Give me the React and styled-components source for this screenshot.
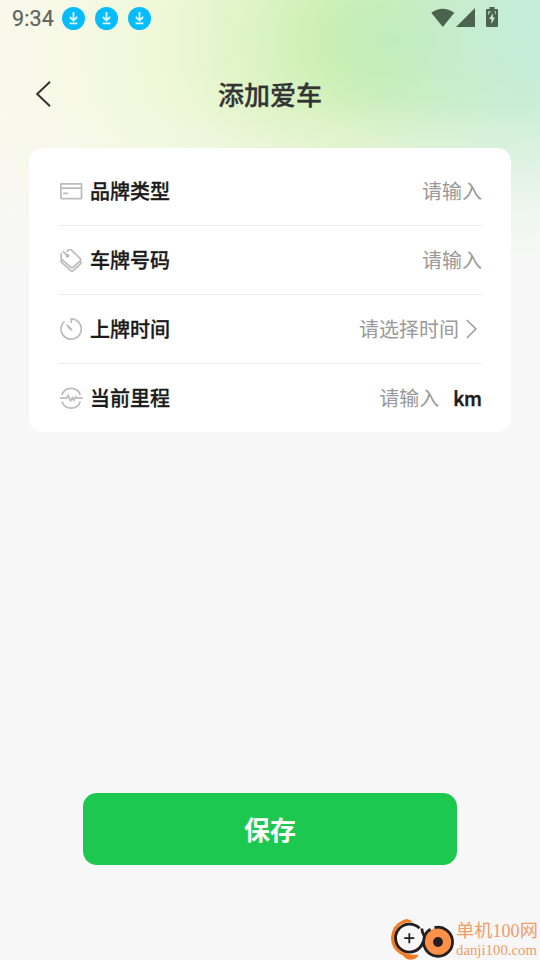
import React from "react";
import styled, { createGlobalStyle } from "styled-components";

const downloads = [1, 2, 3];

const fields = [
    { name: "brand", label: "品牌类型", placeholder: "请输入", icon: "card" },
    { name: "plate", label: "车牌号码", placeholder: "请输入", icon: "tag" },
    { name: "date", label: "上牌时间", placeholder: "请选择时间", icon: "timer", select: true },
    { name: "mileage", label: "当前里程", placeholder: "请输入", icon: "mileage", unit: "km" },
];

const icons = {
    card: (
        <>
            <rect x="0.9" y="3.9" width="20.6" height="14.8" rx="0.6" />
            <path d="M1 8.2H21.5M3.2 13.3H8" />
        </>
    ),
    tag: (
        <>
            <path d="M6.6 3L8.6 0.9Q9.8 -0.2 11.2 0.9L20 9.4Q21.2 10.6 20.1 11.8L13.4 18.1Q12 19.3 10.6 18.1L2 10.6Q1 9.6 1.1 8.2V5.6Q1.1 4.8 2 4.2" />
            <path d="M2.9 2.2L7 6.4M1.1 10.6Q0.8 12.5 1.9 13.6L10.5 21.4Q12 22.7 13.5 21.4L20.2 15.1Q21.2 14 20.9 12.2" />
            <circle cx="7.5" cy="6.8" r="1.2" fill="#bcbcbc" />
        </>
    ),
    timer: (
        <>
            <path d="M4.6 3.3A10.1 10.1 0 1 0 11.3 0.9V4.9" />
            <path d="M6.6 6.6L8.8 8L12.2 11.6L11 12.4L7.8 9.2Z" fill="#bcbcbc" strokeWidth="1" />
        </>
    ),
    mileage: (
        <>
            <path d="M1.9 8A9.7 9.7 0 0 1 20.3 8M1.9 14.4A9.7 9.7 0 0 0 20.3 14.4" />
            <path d="M0 11.2H6.3L8.2 8.4L10.6 13.8L12.6 10.8L13.8 13.2L15.8 9.8L16.8 11.2H22.8" />
        </>
    ),
};

function StatusBar() {
    return (
        <StatusBarStyled>
            <Time>9:34</Time>
            <Downloads>
                {downloads.map((id) => (
                    <svg key={id} width="23" height="23" viewBox="0 0 23 23" fill="none">
                        <circle cx="11.5" cy="11.5" r="11.5" fill="#05bdfd" />
                        <path
                            d="M11.5 5V13.2M7.8 10L11.5 13.5L15.2 10M7.6 16.4H15.4"
                            stroke="#dff7ff"
                            strokeWidth="1.8"
                        />
                    </svg>
                ))}
            </Downloads>
            <Signals>
                <svg width="24" height="20" viewBox="0 0 24 20">
                    <path d="M0.3 4.8Q11.5 -3.2 23.3 4.8L11.8 19Z" />
                </svg>
                <svg width="19" height="20" viewBox="0 0 19 20">
                    <path d="M0 19L19 0V19Z" />
                </svg>
                <Battery width="12" height="20" viewBox="0 0 12 20">
                    <path d="M3.5 0H8.5V2H11Q12 2 12 3V19Q12 20 11 20H1Q0 20 0 19V3Q0 2 1 2H3.5Z" />
                    <path d="M6.8 6.3V10.4H9L5.4 17V12H3.2Z" fill="#c5edcd" />
                    <path d="M2 4.2H5.2L2 8.2ZM8.6 4L10 4V8L8.8 6Z" fill="#a3c7a7" />
                </Battery>
            </Signals>
        </StatusBarStyled>
    );
}

function Field({ label, placeholder, icon, select, unit }) {
    return (
        <FieldStyled>
            <FieldIcon width="24" height="24" viewBox="0 0 24 24">
                {icons[icon]}
            </FieldIcon>
            <Label>{label}</Label>
            <Value>{placeholder}</Value>
            {select && (
                <Arrow width="11" height="20" viewBox="0 0 11 20">
                    <path d="M0.8 1L10 10L0.8 19" />
                </Arrow>
            )}
            {unit && <Unit>{unit}</Unit>}
        </FieldStyled>
    );
}

function Watermark() {
    return (
        <WatermarkStyled>
            <svg width="66" height="43" viewBox="0 0 66 43" fill="none">
                <path
                    d="M23 5.5Q18 -0.5 12.5 3.5Q2 8 1 20Q1 33 13 38.5Q19 46 27 40.5L28.5 37.5Q19 38.5 12 34.5Q4.5 29 4.8 20Q5.3 10 13 6.5Q17 4.5 23 5.5Z"
                    fill="#f47b20"
                />
                <path d="M29.5 11.2A14 14 0 1 0 33 25" stroke="#231f20" strokeWidth="2.8" />
                <path d="M31.8 11.5Q32 16 34.8 20" stroke="#231f20" strokeWidth="2.8" />
                <circle cx="48" cy="25" r="14" fill="#fb9148" />
                <path d="M44.5 10.7A14.5 14.5 0 1 1 34.2 20.5Q35.5 15 40.5 12.2" stroke="#231f20" strokeWidth="2.8" />
                <circle cx="48" cy="25" r="4.9" fill="#231f20" />
                <path d="M19.3 16.2V26.2M14.3 21.2H24.3" stroke="#231f20" strokeWidth="1.8" />
            </svg>
            <WatermarkText>
                <SiteName>单机100网</SiteName>
                <SiteUrl>danji100.com</SiteUrl>
            </WatermarkText>
        </WatermarkStyled>
    );
}

function App() {
    return (
        <Page>
            <GlobalStyle />
            <StatusBar />
            <Header>
                <BackButton aria-label="返回">
                    <svg width="16" height="28" viewBox="0 0 16 28" fill="none">
                        <path d="M15 1.8L2.2 14L15 26.2" stroke="#333" strokeWidth="2" />
                    </svg>
                </BackButton>
                <Title>添加爱车</Title>
            </Header>
            <Card>
                {fields.map((field) => (
                    <Field key={field.name} {...field} />
                ))}
            </Card>
            <SaveButton>保存</SaveButton>
            <Watermark />
        </Page>
    );
}

const GlobalStyle = createGlobalStyle`
    * {
        box-sizing: border-box;
    }
    body {
        margin: 0;
        font-family: "Noto Sans CJK SC", sans-serif;
    }
    button {
        border: none;
        padding: 0;
        background: none;
        font-family: inherit;
    }
`;

const Page = styled.div`
    position: relative;
    display: flex;
    flex-direction: column;
    width: 540px;
    height: 960px;
    overflow: hidden;
    background:
        linear-gradient(to bottom, rgba(247, 247, 247, 0) 100px, rgba(247, 247, 247, 0.35) 170px, rgba(247, 247, 247, 0.8) 225px, #f7f7f7 270px),
        radial-gradient(ellipse 230px 220px at 550px 30px, #c3ecd8 0%, rgba(195, 236, 216, 0.8) 30%, rgba(195, 236, 216, 0.3) 70%, rgba(195, 236, 216, 0) 100%),
        radial-gradient(ellipse 330px 230px at 395px 40px, #bfecaf 0%, rgba(195, 237, 173, 0.86) 18%, rgba(207, 240, 180, 0.56) 42%, rgba(222, 244, 195, 0.24) 68%, rgba(235, 246, 210, 0) 100%),
        linear-gradient(to right, #f9f9ec 0, #f4f9df 150px, #e7f6d2 320px, #dff4e2 540px);
`;

const StatusBarStyled = styled.div`
    display: flex;
    align-items: center;
    height: 37px;
    padding: 0 42px 0 12px;
`;

const Time = styled.span`
    width: 50px;
    font-family: Roboto, sans-serif;
    font-size: 21.5px;
    line-height: 24px;
    letter-spacing: 0.1px;
    color: #60645a;
    -webkit-text-stroke: 0.2px #60645a;
`;

const Downloads = styled.div`
    display: flex;
    gap: 10px;
`;

const Signals = styled.div`
    display: flex;
    align-items: center;
    gap: 1px;
    margin: -1px 0 0 auto;
    fill: #4c6350;
`;

const Battery = styled.svg`
    margin: 0 0 2px 10px;
`;

const Header = styled.header`
    display: grid;
    grid-template-columns: 60px 1fr 60px;
    align-items: center;
    height: 111px;
    padding-top: 3px;
`;

const BackButton = styled.button`
    display: flex;
    padding-left: 35px;
`;

const Title = styled.h1`
    margin: 0;
    font-size: 26px;
    font-weight: 500;
    line-height: 38px;
    text-align: center;
    color: #333;
    -webkit-text-stroke: 0.3px #333;
`;

const Card = styled.section`
    height: 284px;
    margin: 0 29px;
    padding: 9px 29px 0;
    border-radius: 14px;
    background: #fff;
`;

const FieldStyled = styled.div`
    display: flex;
    align-items: center;
    height: 69px;
    padding-left: 2px;
    border-bottom: 1px solid #ededed;

    &:last-child {
        height: 68px;
        border-bottom: none;
    }
`;

const FieldIcon = styled.svg`
    flex: none;
    margin-top: 2px;
    fill: none;
    stroke: #bcbcbc;
    stroke-width: 1.7;
`;

const Label = styled.span`
    margin-left: 6px;
    font-size: 20px;
    font-weight: 500;
    line-height: 30px;
    color: #1a1a1a;
    -webkit-text-stroke: 0.3px #1a1a1a;
`;

const Value = styled.span`
    margin-left: auto;
    font-size: 20px;
    font-weight: 400;
    line-height: 30px;
    color: #999;
`;

const Arrow = styled.svg`
    margin: 0 5px 0 7px;
    fill: none;
    stroke: #999;
    stroke-width: 1.5;
`;

const Unit = styled.span`
    margin-left: 14px;
    font-size: 19px;
    font-weight: 500;
    line-height: 30px;
    color: #1a1a1a;
    -webkit-text-stroke: 0.5px #1a1a1a;
`;

const SaveButton = styled.button`
    width: 374px;
    height: 72px;
    margin: 361px auto 0;
    padding-bottom: 2px;
    border-radius: 14px;
    background: #1cc84f;
    font-size: 26px;
    font-weight: 700;
    color: #fff;
`;

const WatermarkStyled = styled.div`
    position: absolute;
    right: 2px;
    bottom: 0;
    display: flex;
    width: 148px;
    height: 43px;
`;

const WatermarkText = styled.div`
    display: flex;
    flex-direction: column;
    padding-top: 3px;
    font-family: "Liberation Serif", "Noto Sans CJK SC", serif;
    color: #f29b67;
    white-space: nowrap;
`;

const SiteName = styled.span`
    font-size: 18.2px;
    font-weight: 400;
    line-height: 23px;
`;

const SiteUrl = styled.span`
    font-size: 14.8px;
    line-height: 14px;
`;

export default App;
